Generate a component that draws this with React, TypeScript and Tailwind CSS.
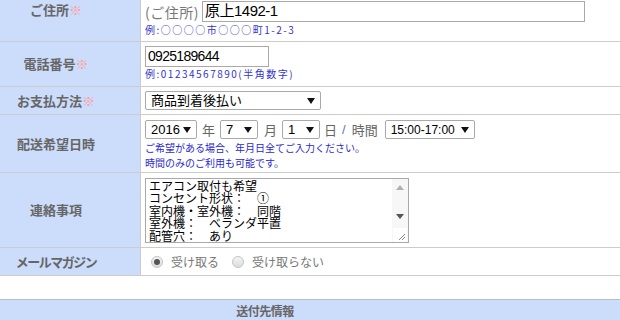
import React from 'react';

const jp = { fontFamily: '"Noto Sans CJK JP", "Noto Sans", sans-serif' };
const latin = { fontFamily: '"Liberation Sans", "Noto Sans CJK JP", sans-serif' };

function Arrow() {
  return (
    <svg width="8" height="6" viewBox="0 0 8 6" className="shrink-0">
      <path d="M0 0 H8 L4 6 Z" fill="#111" />
    </svg>
  );
}

function Select({ value, width, size = 'text-[13px]' }: { value: string; width: string; size?: string }) {
  return (
    <div
      className={`inline-flex items-center justify-between h-[19px] border border-[#a9a9a9] rounded-[2px] bg-white pl-[5px] pr-[5px] text-black ${size} ${width}`}
      style={latin}
    >
      <span className="leading-none">{value}</span>
      <Arrow />
    </div>
  );
}

function Label({ text, req, top, tight }: { text: string; req?: boolean; top?: boolean; tight?: boolean }) {
  return (
    <div
      className={`w-[141px] shrink-0 bg-[#ccdcfb] border-r border-[#cccccc] flex justify-center pr-[28px] ${top ? 'items-start pt-[1px]' : 'items-center'}`}
    >
      <span
        className={`text-[13px] font-bold text-[#666] leading-[18px] whitespace-nowrap ${tight ? 'tracking-[-1.5px]' : ''}`}
        style={jp}
      >
        {text}
        {req && <span className="text-[#ff9c9c]">※</span>}
      </span>
    </div>
  );
}

function Radio({ checked }: { checked?: boolean }) {
  return (
    <span className="inline-flex items-center justify-center w-[12px] h-[12px] rounded-full border border-[#c4c4c4] bg-gradient-to-b from-[#f4f4f4] to-[#dcdcdc]">
      {checked && <span className="w-[6px] h-[6px] rounded-full bg-[#555]" />}
    </span>
  );
}

const example = 'text-[10px] tracking-[1.5px] text-[#3434cc] leading-[12px] whitespace-nowrap';

export default function App() {
  return (
    <div className="w-[620px] h-[320px] overflow-hidden bg-white" style={jp}>
      {/* ご住所 */}
      <div className="flex h-[42px] border-b border-[#cccccc]">
        <Label text="ご住所" req top />
        <div className="flex-1 pl-[4px]">
          <div className="flex items-center gap-[3px] pt-[1px]">
            <span className="text-[14px] text-[#777] leading-[20px] tracking-[0.5px]" style={jp}>(ご住所)</span>
            <div className="w-[383px] h-[21px] border border-[#a9a9a9] flex items-center pl-[2px] text-[15px] text-black tracking-[-0.5px]" style={latin}>
              原上1492-1
            </div>
          </div>
          <div className={`${example} mt-[2px]`} style={jp}>例:○○○○市○○○町1-2-3</div>
        </div>
      </div>

      {/* 電話番号 */}
      <div className="flex h-[45px] border-b border-[#cccccc]">
        <Label text="電話番号" req />
        <div className="flex-1 pl-[4px] pt-[4px]">
          <div className="w-[124px] h-[21px] border border-[#a9a9a9] flex items-center pl-[2px] text-[14px] text-black tracking-[-0.7px]" style={latin}>
            0925189644
          </div>
          <div className={`${example} mt-[1px]`} style={jp}>例:01234567890(半角数字)</div>
        </div>
      </div>

      {/* お支払方法 */}
      <div className="flex h-[28px] border-b border-[#cccccc]">
        <Label text="お支払方法" req />
        <div className="flex-1 pl-[4px] flex items-center">
          <Select value="商品到着後払い" width="w-[176px]" />
        </div>
      </div>

      {/* 配送希望日時 */}
      <div className="flex h-[58px] border-b border-[#cccccc]">
        <Label text="配送希望日時" />
        <div className="flex-1 pl-[4px] pt-[5px]">
          <div className="flex items-center text-[13px] text-[#666]" style={jp}>
            <Select value="2016" width="w-[52px]" />
            <span className="ml-[5px] mr-[5px] leading-none">年</span>
            <Select value="7" width="w-[38px]" />
            <span className="ml-[6px] mr-[5px] leading-none">月</span>
            <Select value="1" width="w-[38px]" />
            <span className="ml-[4px] leading-none">日</span>
            <span className="ml-[5px] mr-[6px] text-[#5a78b4] leading-none" style={latin}>/</span>
            <span className="mr-[7px] leading-none">時間</span>
            <Select value="15:00-17:00" width="w-[90px]" size="text-[12px]" />
          </div>
          <div className="text-[10px] text-[#2a2ad0] leading-[15px] mt-[1px] whitespace-nowrap" style={jp}>
            ご希望がある場合、年月日全てご入力ください。
            <br />
            時間のみのご利用も可能です。
          </div>
        </div>
      </div>

      {/* 連絡事項 */}
      <div className="flex h-[75px] border-b border-[#cccccc]">
        <Label text="連絡事項" />
        <div className="flex-1 pl-[4px] pt-[5px]">
          <div className="w-[264px] h-[65px] border border-[#a9a9a9] flex bg-white">
            <div className="flex-1 pl-[3px] pt-[1px] text-[12px] leading-[12.4px] text-black whitespace-pre" style={jp}>
              {'エアコン取付も希望\nコンセント形状：　①\n室内機・室外機：　同階\n室外機：　ベランダ平置\n配管穴：　あり'}
            </div>
            <div className="w-[16px] bg-[#f7f7f7] flex flex-col items-center justify-between">
              <svg width="8" height="5" viewBox="0 0 8 5" className="mt-[6px]">
                <path d="M0 5 L4 0 L8 5 Z" fill="#b0b0b0" />
              </svg>
              <svg width="8" height="5" viewBox="0 0 8 5" className="mt-[24px]">
                <path d="M0 0 H8 L4 5 Z" fill="#555" />
              </svg>
              <svg width="14" height="14" viewBox="0 0 14 14" className="mt-auto bg-white">
                <path d="M12 6 L6 12 M12 9 L9 12" stroke="#888" strokeWidth="1" />
              </svg>
            </div>
          </div>
        </div>
      </div>

      {/* メールマガジン */}
      <div className="flex h-[28px] border-b border-[#cccccc]">
        <Label text="メールマガジン" tight />
        <div className="flex-1 pl-[10px] flex items-center text-[12px] text-[#777]" style={jp}>
          <Radio checked />
          <span className="ml-[8px] mr-[13px]">受け取る</span>
          <Radio />
          <span className="ml-[8px]">受け取らない</span>
        </div>
      </div>

      <div className="h-[23px]" />

      {/* 送付先情報 */}
      <div className="h-[22px] bg-[#ccdcfb] border-t border-[#bdbdbd] flex items-center justify-center pr-[90px]">
        <span className="text-[12px] font-bold text-[#666] tracking-[-0.5px]" style={jp}>送付先情報</span>
      </div>
    </div>
  );
}
